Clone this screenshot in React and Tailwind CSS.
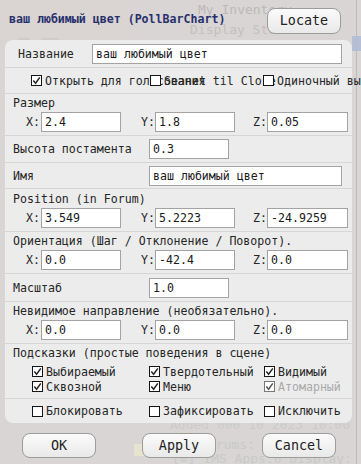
import React from "react";

const MONO = "font-['DejaVu_Sans_Mono',monospace]";

function Box({ checked, disabled }) {
  return (
    <span
      className={`inline-flex w-[11px] h-[11px] shrink-0 items-center justify-center bg-white border ${
        disabled ? "border-[#777]" : "border-[#151515]"
      }`}
    >
      {checked && (
        <svg width="9" height="9" viewBox="0 0 9 9">
          <path
            d="M1.3 4.6 L3.6 7.2 L7.8 1.4"
            stroke={disabled ? "#555" : "#262626"}
            strokeWidth="1.5"
            fill="none"
          />
        </svg>
      )}
    </span>
  );
}

function Check({ label, checked, disabled, w }) {
  return (
    <div className={`flex items-center gap-[3px] shrink-0 whitespace-nowrap ${w}`}>
      <Box checked={checked} disabled={disabled} />
      <span className={disabled ? "text-[#a9a9a9]" : "text-[#262626]"}>{label}</span>
    </div>
  );
}

function Field({ value, w }) {
  return (
    <div
      className={`h-[20px] ${w} bg-white border border-[#a3a3a3] flex items-center pl-[3px] text-[#1a1a1a] whitespace-nowrap overflow-hidden`}
    >
      {value}
    </div>
  );
}

function XYZ({ x, y, z }) {
  return (
    <div className="flex items-center pl-[21px]">
      <span className="w-[15px] text-[#262626]">X:</span>
      <Field value={x} w="w-[80px]" />
      <span className="ml-[20px] w-[14px] text-[#262626]">Y:</span>
      <Field value={y} w="w-[80px]" />
      <span className="ml-[18px] w-[14px] text-[#262626]">Z:</span>
      <Field value={z} w="w-[81px]" />
    </div>
  );
}

function Btn({ children }) {
  return (
    <div className="w-[74px] h-[25px] rounded-[8px] border border-[#9c9c9c] bg-gradient-to-b from-[#fbfbfb] to-[#e9e9e9] flex items-center justify-center text-[13.4px] text-[#222]">
      {children}
    </div>
  );
}

export default function App() {
  return (
    <div className={`relative w-[361px] h-[464px] overflow-hidden bg-[#d8d5d4] ${MONO} text-[11.6px] leading-[14px]`}>
      {/* faint background content */}
      <div className="absolute left-[0px] top-[0px] w-[130px] h-[140px] bg-[#dbd3d2] opacity-50"></div>
      <div className="absolute left-[10px] top-[22px] text-[44px] leading-[50px] text-[#d0cccb]">ет</div>
      <div className="absolute left-[198px] top-[3px] text-[13px] text-[#bdb9b8]">My Inventory</div>
      <div className="absolute left-[190px] top-[23px] text-[13px] text-[#c4c0bf]">Display Stan</div>
      <div className="absolute left-[352px] top-[36px] w-[9px] h-[15px] bg-[#b4bed6]"></div>
      <div className="absolute left-[356px] top-[0px] w-[1px] h-[464px] bg-[#bcbcbc]"></div>
      <div className="absolute left-[170px] top-[418px] text-[13px] text-[#cbcbcb]">Added 000 10 2023 10:00 ac</div>
      <div className="absolute left-[208px] top-[438px] text-[13px] text-[#c9c9c9]">orums:        rk:</div>
      <div className="absolute left-[172px] top-[452px] text-[13px] text-[#c9c9c9]">[=] IMS Apps:0  Display:</div>
      <div className="absolute left-[134px] top-[444px] w-[16px] h-[12px] bg-[#e6e3cf]"></div>

      <div className="relative flex flex-col">
        {/* header */}
        <div className="h-[40px] flex items-center justify-between pl-[9px] pr-[20px]">
          <span className="font-bold text-[#27306c] text-[11.6px] -mt-[2px]">ваш любимый цвет (PollBarChart)</span>
          <div className="w-[74px] h-[26px] mt-[1px] rounded-[8px] border border-[#9c9c9c] bg-gradient-to-b from-[#fbfbfb] to-[#e9e9e9] flex items-center justify-center text-[13.4px] text-[#222]">
            Locate
          </div>
        </div>

        {/* panel */}
        <div className="ml-[5px] w-[347px] h-[383px] rounded-[8px] bg-[#ececec] flex flex-col text-[#262626]">
          {/* Название */}
          <div className="h-[28px] border-b border-[#d6d6d6] flex items-center pl-[13px]">
            <span className="w-[74px]">Название</span>
            <Field value="ваш любимый цвет" w="w-[250px]" />
          </div>
          {/* checkboxes row */}
          <div className="h-[26px] border-b border-[#d6d6d6] flex items-center pl-[26px]">
            <Check label="Открыть для голосования" checked w="w-[119px]" />
            <Check label="Seanet til Close" w="w-[113px]" />
            <Check label="Одиночный выбор" w="w-[100px]" />
          </div>
          {/* Размер */}
          <div className="h-[42px] border-b border-[#d6d6d6] flex flex-col pt-[2px]">
            <span className="pl-[8px] h-[16px]">Размер</span>
            <XYZ x="2.4" y="1.8" z="0.05" />
          </div>
          {/* Высота */}
          <div className="h-[27px] border-b border-[#d6d6d6] flex items-center pl-[8px]">
            <span className="w-[136px]">Высота постамента</span>
            <Field value="0.3" w="w-[80px]" />
          </div>
          {/* Имя */}
          <div className="h-[26px] border-b border-[#d6d6d6] flex items-center pl-[8px]">
            <span className="w-[136px]">Имя</span>
            <Field value="ваш любимый цвет" w="w-[193px]" />
          </div>
          {/* Position */}
          <div className="h-[43px] border-b border-[#d6d6d6] flex flex-col pt-[3px]">
            <span className="pl-[8px] h-[16px]">Position (in Forum)</span>
            <XYZ x="3.549" y="5.2223" z="-24.9259" />
          </div>
          {/* Ориентация */}
          <div className="h-[42px] border-b border-[#d6d6d6] flex flex-col pt-[2px]">
            <span className="pl-[8px] h-[16px]">Ориентация (Шаг / Отклонение / Поворот).</span>
            <XYZ x="0.0" y="-42.4" z="0.0" />
          </div>
          {/* Масштаб */}
          <div className="h-[28px] border-b border-[#d6d6d6] flex items-center pl-[8px]">
            <span className="w-[136px]">Масштаб</span>
            <Field value="1.0" w="w-[80px]" />
          </div>
          {/* Невидимое */}
          <div className="h-[42px] border-b border-[#d6d6d6] flex flex-col pt-[2px]">
            <span className="pl-[8px] h-[16px]">Невидимое направление (необязательно).</span>
            <XYZ x="0.0" y="0.0" z="0.0" />
          </div>
          {/* Подсказки */}
          <div className="h-[55px] border-b border-[#d6d6d6] flex flex-col pt-[2px]">
            <span className="pl-[8px] h-[18px]">Подсказки (простые поведения в сцене)</span>
            <div className="flex pl-[27px] h-[15px] items-center">
              <Check label="Выбираемый" checked w="w-[117px]" />
              <Check label="Твердотельный" checked w="w-[115px]" />
              <Check label="Видимый" checked w="w-[80px]" />
            </div>
            <div className="flex pl-[27px] h-[15px] items-center">
              <Check label="Сквозной" checked w="w-[117px]" />
              <Check label="Меню" checked w="w-[115px]" />
              <Check label="Атомарный" checked disabled w="w-[80px]" />
            </div>
          </div>
          {/* bottom checks */}
          <div className="flex-1 flex items-center pl-[27px]">
            <Check label="Блокировать" w="w-[117px]" />
            <Check label="Зафиксировать" w="w-[115px]" />
            <Check label="Исключить" w="w-[80px]" />
          </div>
        </div>

        {/* buttons */}
        <div className="flex pl-[22px] gap-[46px] mt-[10px]">
          <Btn>OK</Btn>
          <Btn>Apply</Btn>
          <Btn>Cancel</Btn>
        </div>
      </div>
    </div>
  );
}
